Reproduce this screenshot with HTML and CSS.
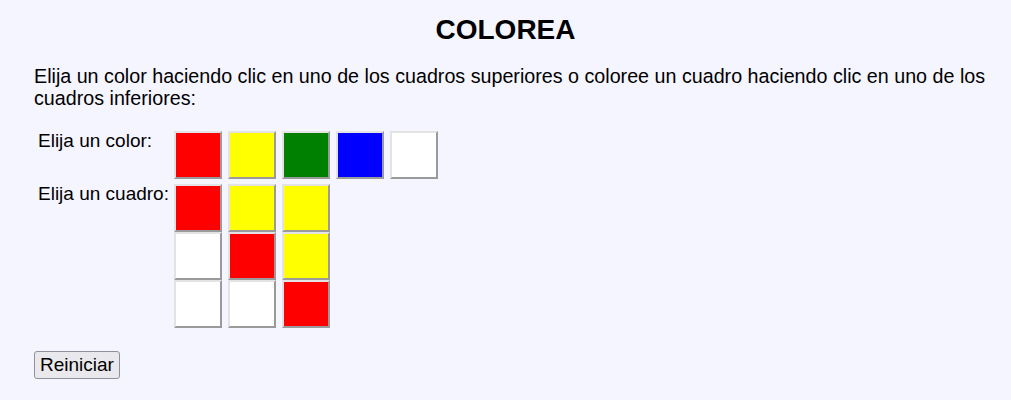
FILE: index.html
```html
<!DOCTYPE html>
<html lang="es">

<head>
    <meta charset="UTF-8">
    <meta name="viewport" content="width=device-width, initial-scale=1.0">
    <title>Colorea</title>
    <link rel="stylesheet" href="styles.css">
</head>

<body>
    <div class="page">
        <h1 class="title">COLOREA</h1>
        <p class="intro">Elija un color haciendo clic en uno de los cuadros superiores o coloree un cuadro haciendo clic en uno de los cuadros inferiores:</p>

        <div class="board">
            <div class="label">Elija un color:</div>
            <div class="palette">
                <span class="sq red"></span>
                <span class="sq yellow"></span>
                <span class="sq green"></span>
                <span class="sq blue"></span>
                <span class="sq white"></span>
            </div>

            <div class="label">Elija un cuadro:</div>
            <div class="grid">
                <span class="sq red"></span>
                <span class="sq yellow"></span>
                <span class="sq yellow"></span>
                <span class="sq white"></span>
                <span class="sq red"></span>
                <span class="sq yellow"></span>
                <span class="sq white"></span>
                <span class="sq white"></span>
                <span class="sq red"></span>
            </div>
        </div>

        <button class="reset">Reiniciar</button>
    </div>
</body>

</html>
```

FILE: styles.css
```css
* {
    padding: 0;
    margin: 0;
    box-sizing: border-box;
}

html,
body {
    height: 100%;
    width: 100%;
}

body {
    background: #f5f5ff;
    font-family: "Liberation Sans", Arial, sans-serif;
    color: #000;
}

.page {
    padding: 14px 34px 0;
}

.title {
    text-align: center;
    font-size: 28px;
    line-height: 32px;
    font-weight: bold;
}

.intro {
    margin-top: 19px;
    margin-right: -20px;
    font-size: 19.7px;
    line-height: 22px;
}

.board {
    margin-top: 22px;
    display: grid;
    grid-template-columns: 140px auto;
    row-gap: 5px;
    justify-content: start;
}

.label {
    font-size: 19px;
    line-height: 19px;
    padding-left: 4px;
}

.palette {
    display: flex;
    gap: 6px;
}

.grid {
    display: grid;
    grid-template-columns: repeat(3, 48px);
    column-gap: 6px;
}

.sq {
    display: block;
    width: 48px;
    height: 48px;
    border: 2px solid;
    border-color: #e3e3e3 #9a9a9a #9a9a9a #e3e3e3;
}

.red {
    background: #ff0000;
}

.yellow {
    background: #ffff00;
}

.green {
    background: #008000;
}

.blue {
    background: #0000ff;
}

.white {
    background: #ffffff;
}

.reset {
    margin-top: 23px;
    font-family: "Liberation Sans", Arial, sans-serif;
    font-size: 19px;
    line-height: 22px;
    padding: 2px 5px;
    background: #e9e9ed;
    border: 1px solid #8f8f9d;
    border-radius: 3px;
    color: #000;
}
```
